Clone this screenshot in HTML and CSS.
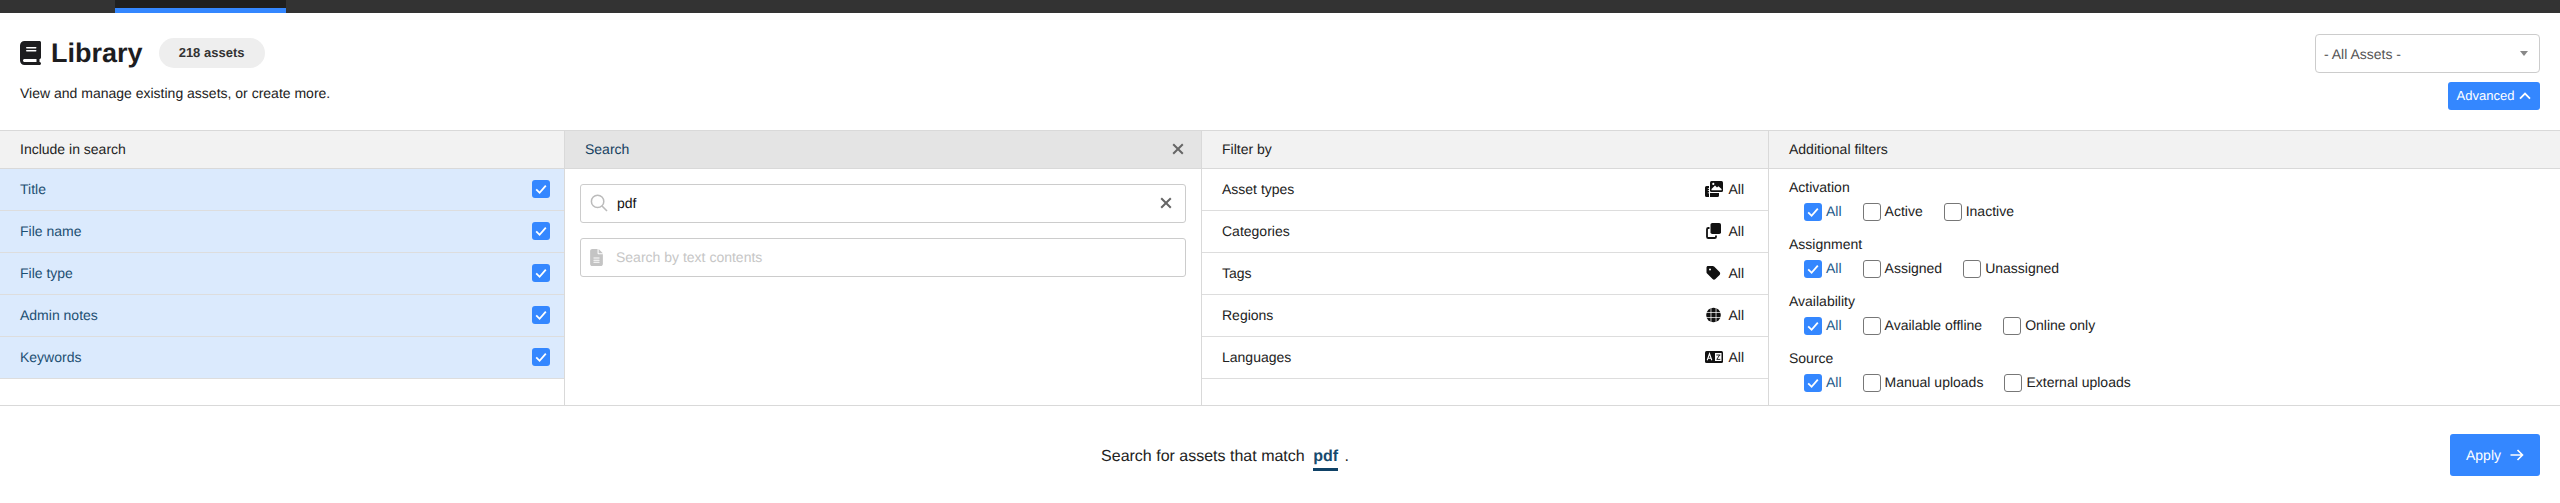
FILE: index.html
```html
<!DOCTYPE html>
<html lang="en">
<head>
<meta charset="utf-8">
<title>Library</title>
<link rel="stylesheet" href="styles.css">
</head>
<body>
<svg class="defs" width="0" height="0" aria-hidden="true">
  <symbol id="check" viewBox="0 0 18 18"><path d="M4.2 9.4 7.6 12.8 13.8 5.6" fill="none" stroke="#fff" stroke-width="1.8"/></symbol>
  <symbol id="x" viewBox="0 0 12 12"><path d="M1.2 1.2 10.8 10.8M10.8 1.2 1.2 10.8" fill="none" stroke="#666" stroke-width="2"/></symbol>
</svg>
<nav class="topbar"><span class="topbar-tab"></span></nav>
<header class="head">
  <div class="head-left">
    <div class="title-row">
      <svg class="book" viewBox="0 0 448 512"><path fill="#1d1d1f" d="M96 0C43 0 0 43 0 96V416c0 53 43 96 96 96H384h32c17.7 0 32-14.3 32-32s-14.3-32-32-32V384c17.7 0 32-14.3 32-32V32c0-17.7-14.3-32-32-32H384 96zm0 384H352v64H96c-17.7 0-32-14.3-32-32s14.3-32 32-32zm32-240c0-8.8 7.2-16 16-16H336c8.8 0 16 7.2 16 16s-7.2 16-16 16H144c-8.8 0-16-7.2-16-16zm16 48H336c8.8 0 16 7.2 16 16s-7.2 16-16 16H144c-8.8 0-16-7.2-16-16s7.2-16 16-16z"/></svg>
      <h1 class="title">Library</h1>
      <span class="badge">218 assets</span>
    </div>
    <p class="subtitle">View and manage existing assets, or create more.</p>
  </div>
  <div class="head-right">
    <div class="select"><span>- All Assets -</span><i class="caret"></i></div>
    <button class="btn-adv">Advanced<svg class="chev" viewBox="0 0 12 8"><path d="M1 6.6 6 1.6 11 6.6" fill="none" stroke="#fff" stroke-width="1.8"/></svg></button>
  </div>
</header>
<main class="panels">
  <section class="panel">
    <div class="panel-head">Include in search</div>
    <div class="row on"><span>Title</span><span class="cb checked"><svg><use href="#check"/></svg></span></div>
    <div class="row on"><span>File name</span><span class="cb checked"><svg><use href="#check"/></svg></span></div>
    <div class="row on"><span>File type</span><span class="cb checked"><svg><use href="#check"/></svg></span></div>
    <div class="row on"><span>Admin notes</span><span class="cb checked"><svg><use href="#check"/></svg></span></div>
    <div class="row on"><span>Keywords</span><span class="cb checked"><svg><use href="#check"/></svg></span></div>
  </section>
  <section class="panel">
    <div class="panel-head active"><span>Search</span><svg class="x-head"><use href="#x"/></svg></div>
    <div class="search-body">
      <div class="field">
        <svg class="field-ico" viewBox="0 0 18 18"><circle cx="7.6" cy="7.4" r="6.2" fill="none" stroke="#bbb" stroke-width="1.5"/><path d="M12 12 17 17" stroke="#bbb" stroke-width="1.6"/></svg>
        <span class="field-val">pdf</span>
        <svg class="x-field"><use href="#x"/></svg>
      </div>
      <div class="field">
        <svg class="field-doc" viewBox="0 0 384 512"><path fill="#c4c4c4" d="M64 0C28.7 0 0 28.7 0 64V448c0 35.3 28.7 64 64 64H320c35.3 0 64-28.7 64-64V160H256c-17.7 0-32-14.3-32-32V0H64zM256 0V128H384L256 0zM112 256H272c8.8 0 16 7.2 16 16s-7.2 16-16 16H112c-8.8 0-16-7.2-16-16s7.2-16 16-16zm0 64H272c8.8 0 16 7.2 16 16s-7.2 16-16 16H112c-8.8 0-16-7.2-16-16s7.2-16 16-16zm0 64H272c8.8 0 16 7.2 16 16s-7.2 16-16 16H112c-8.8 0-16-7.2-16-16s7.2-16 16-16z"/></svg>
        <span class="field-ph">Search by text contents</span>
      </div>
    </div>
  </section>
  <section class="panel">
    <div class="panel-head">Filter by</div>
    <div class="row"><span>Asset types</span><span class="val">
      <svg class="ico" viewBox="0 0 18 16"><path fill="#111" d="M5 1.500A1.500 1.500 0 0 1 6.500 0h10A1.500 1.500 0 0 1 18 1.500v8A1.500 1.500 0 0 1 16.500 11h-10A1.500 1.500 0 0 1 5 9.500z"/><path fill="#fff" d="M6.500 8 10 4.600l2 1.900 1.400-1.200L16.600 8v1.300H6.500z"/><circle cx="8.300" cy="2.900" r="1.100" fill="#fff"/><path fill="#111" d="M1.500 5H4v2H2.800v.8H4v1.400H2.800V10H4v1.400H2.800v.8H4V16H1.500A1.500 1.500 0 0 1 0 14.500v-8A1.500 1.500 0 0 1 1.500 5zM5 12h9v2.500a1.500 1.500 0 0 1-1.500 1.500H5z"/></svg>All</span></div>
    <div class="row"><span>Categories</span><span class="val">
      <svg class="ico ico-sm" viewBox="0 0 15 16"><rect x="4.500" y="0" width="10.500" height="11" rx="1.800" fill="#111"/><path d="M3.500 5H2.300A1.300 1.300 0 0 0 1 6.300v7.400A1.300 1.300 0 0 0 2.300 15h6.400A1.300 1.300 0 0 0 10 13.700V12.500" fill="none" stroke="#111" stroke-width="1.800"/></svg>All</span></div>
    <div class="row"><span>Tags</span><span class="val">
      <svg class="ico ico-sm" viewBox="0 0 448 512"><path fill="#111" d="M0 80V229.500c0 17 6.700 33.300 18.700 45.300l176 176c25 25 65.500 25 90.500 0L418.700 317.300c25-25 25-65.500 0-90.500l-176-176c-12-12-28.300-18.700-45.300-18.700H48C21.500 32 0 53.500 0 80zm112 32a32 32 0 1 1 0 64 32 32 0 1 1 0-64z"/></svg>All</span></div>
    <div class="row"><span>Regions</span><span class="val">
      <svg class="ico ico-sm" viewBox="0 0 16 16"><circle cx="8" cy="8" r="7.800" fill="#111"/><path d="M0 5.300h16M0 10.700h16M5.300 0v16M10.700 0v16" stroke="#fff" stroke-width=".8" fill="none"/></svg>All</span></div>
    <div class="row"><span>Languages</span><span class="val">
      <svg class="ico" viewBox="0 0 18 14"><rect y="1" width="18" height="12" rx="1.500" fill="#111"/><path d="M2.200 10.300 4.500 3.700 6.800 10.300M3 8.300H6" fill="none" stroke="#fff" stroke-width="1.100"/><rect x="10" y="3" width="6.500" height="8" fill="#fff"/><path d="M11.300 5h4M14.600 5 11.800 9.400h3.500" fill="none" stroke="#111" stroke-width=".9"/></svg>All</span></div>
  </section>
  <section class="panel">
    <div class="panel-head">Additional filters</div>
    <div class="groups">
      <div class="group">
        <div class="group-label">Activation</div>
        <div class="opts">
          <label class="opt sel"><span class="cb checked"><svg><use href="#check"/></svg></span>All</label>
          <label class="opt"><span class="cb"></span>Active</label>
          <label class="opt"><span class="cb"></span>Inactive</label>
        </div>
      </div>
      <div class="group">
        <div class="group-label">Assignment</div>
        <div class="opts">
          <label class="opt sel"><span class="cb checked"><svg><use href="#check"/></svg></span>All</label>
          <label class="opt"><span class="cb"></span>Assigned</label>
          <label class="opt"><span class="cb"></span>Unassigned</label>
        </div>
      </div>
      <div class="group">
        <div class="group-label">Availability</div>
        <div class="opts">
          <label class="opt sel"><span class="cb checked"><svg><use href="#check"/></svg></span>All</label>
          <label class="opt"><span class="cb"></span>Available offline</label>
          <label class="opt"><span class="cb"></span>Online only</label>
        </div>
      </div>
      <div class="group">
        <div class="group-label">Source</div>
        <div class="opts">
          <label class="opt sel"><span class="cb checked"><svg><use href="#check"/></svg></span>All</label>
          <label class="opt"><span class="cb"></span>Manual uploads</label>
          <label class="opt"><span class="cb"></span>External uploads</label>
        </div>
      </div>
    </div>
  </section>
</main>
<footer class="foot">
  <p class="summary">Search for assets that match <b class="term">pdf</b> <span class="dot">.</span></p>
  <button class="btn-apply">Apply<svg class="arrow" viewBox="0 0 14 12"><path d="M0.500 6H12.500M7.500 1 12.500 6 7.500 11" fill="none" stroke="#fff" stroke-width="1.600"/></svg></button>
</footer>
</body>
</html>
```
FILE: styles.css
```css
* { box-sizing: border-box; }
html, body { margin: 0; padding: 0; }
body {
  width: 2560px;
  height: 503px;
  overflow: hidden;
  background: #fff;
  color: #222;
  font-family: "Liberation Sans", Arial, sans-serif;
  font-size: 14px;
  line-height: 20px;
  text-rendering: geometricPrecision;
}
.defs { position: absolute; }

.topbar { height: 13px; background: #333; padding-left: 115px; }
.topbar-tab {
  display: block;
  width: 171px;
  height: 13px;
  background: #1f1f1f;
  border-bottom: 5px solid #3487ff;
}

.head {
  height: 117px;
  display: flex;
  justify-content: space-between;
  padding: 21px 20px 0;
}
.title-row { display: flex; align-items: center; height: 30px; margin-top: 4px; }
.book { width: 21px; height: 24px; margin-right: 10px; }
.title { margin: 0 16px 0 0; font-size: 27px; line-height: 30px; font-weight: 700; color: #1d1d1f; }
.badge {
  width: 106px;
  height: 30px;
  border-radius: 15px;
  background: #eee;
  color: #333;
  font-size: 13px;
  font-weight: 700;
  line-height: 30px;
  text-align: center;
}
.subtitle { margin: 15px 0 0; }
.head-right { display: flex; flex-direction: column; align-items: flex-end; }
.select {
  width: 225px;
  height: 39px;
  border: 1px solid #ccc;
  border-radius: 4px;
  display: flex;
  align-items: center;
  justify-content: space-between;
  padding: 0 11px 0 8px;
  color: #555;
}
.caret {
  width: 0;
  height: 0;
  border-left: 4px solid transparent;
  border-right: 4px solid transparent;
  border-top: 5px solid #888;
}
.btn-adv {
  margin-top: 9px;
  width: 92px;
  height: 28px;
  border: 0;
  border-radius: 3px;
  background: #3487ff;
  color: #fff;
  font: 13px/28px "Liberation Sans", Arial, sans-serif;
  text-rendering: geometricPrecision;
  padding: 0;
  display: flex;
  align-items: center;
  justify-content: center;
}
.chev { width: 12px; height: 8px; margin-left: 5px; }

.panels {
  height: 276px;
  display: grid;
  grid-template-columns: 565px 637px 567px 1fr;
  border-top: 1px solid #d9d9d9;
  border-bottom: 1px solid #d9d9d9;
}
.panel { border-right: 1px solid #d9d9d9; min-width: 0; }
.panel:last-child { border-right: 0; }
.panel-head {
  height: 38px;
  background: #f2f2f2;
  border-bottom: 1px solid #d9d9d9;
  padding: 0 20px 1px;
  display: flex;
  align-items: center;
  justify-content: space-between;
}
.panel-head.active { background: #e4e4e4; color: #15405f; }
.x-head { width: 12px; height: 12px; margin-right: -3px; }

.row {
  height: 42px;
  border-bottom: 1px solid #ddd;
  padding: 0 24px 1px 20px;
  display: flex;
  align-items: center;
  justify-content: space-between;
}
.row.on { background: #dbeafd; color: #1d4f72; padding-right: 14px; }

.cb {
  width: 18px;
  height: 18px;
  flex: none;
  border: 1px solid #777;
  border-radius: 3px;
  background: #fff;
  display: block;
}
.cb.checked { background: #3487ff; border: 0; }
.cb svg { width: 18px; height: 18px; display: block; }

.val { display: flex; align-items: center; }
.ico { width: 18px; height: 16px; margin-right: 5px; }
.ico-sm { width: 15px; height: 16px; margin-left: 1px; margin-right: 7px; }

.search-body { padding: 15px 15px 0; }
.field {
  height: 39px;
  border: 1px solid #ccc;
  border-radius: 3px;
  display: flex;
  align-items: center;
  margin-bottom: 15px;
  padding: 0 0 1px 9px;
}
.field-ico { width: 18px; height: 18px; margin-right: 9px; }
.field-doc { width: 13px; height: 17px; margin-right: 13px; }
.field-val { color: #111; }
.field-ph { color: #c6c6c6; }
.x-field { width: 12px; height: 12px; margin-left: auto; margin-right: 13px; }

.groups { padding: 8px 20px 0; }
.group { height: 57px; }
.group-label { height: 20px; line-height: 20px; }
.opts { display: flex; padding-left: 15px; margin-top: 6px; }
.opt { display: flex; align-items: flex-start; height: 18px; line-height: 16px; margin-right: 21px; gap: 4px; }
.opt.sel { color: #1d5a8a; }

.foot {
  height: 97px;
  display: flex;
  align-items: flex-start;
  padding: 28px 20px 0 0;
}
.summary {
  flex: 1;
  margin: 11px 0 0;
  font-size: 16px;
  line-height: 20px;
  color: #222;
  text-align: center;
}
.term {
  display: inline-block;
  margin: 0 2px 0 4px;
  color: #164a6e;
  border-bottom: 3px solid #0f4166;
  line-height: 23px;
}
.btn-apply {
  width: 90px;
  height: 42px;
  border: 0;
  border-radius: 3px;
  background: #3487ff;
  color: #fff;
  font: 14px/20px "Liberation Sans", Arial, sans-serif;
  text-rendering: geometricPrecision;
  display: flex;
  align-items: center;
  justify-content: center;
  padding: 0;
}
.arrow { width: 14px; height: 12px; margin-left: 9px; }
```
